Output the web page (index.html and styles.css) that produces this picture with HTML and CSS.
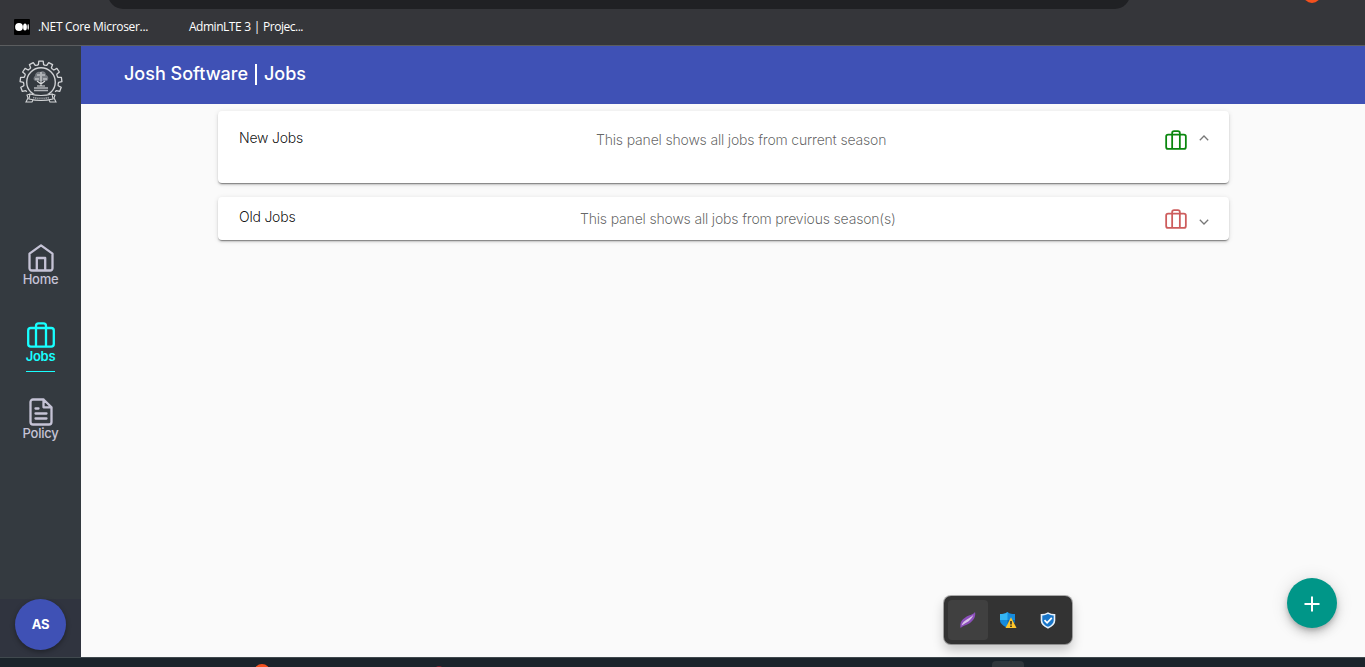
FILE: index.html
```html
<!DOCTYPE html>
<html lang="en">
<head>
<meta charset="utf-8">
<title>Josh Software | Jobs</title>
<link rel="stylesheet" href="styles.css">
</head>
<body>
<svg width="0" height="0" class="defs">
  <symbol id="case" viewBox="0 0 28 26"><g fill="none" stroke="currentColor" stroke-width="2.3" stroke-linejoin="round"><rect x="1.2" y="6" width="25.6" height="18.6" rx="2.6"/><path d="M9 24.6V4a2.6 2.6 0 0 1 2.6-2.6h4.8A2.6 2.6 0 0 1 19 4v20.6"/></g></symbol>
</svg>
<header class="bookmarks">
  <div class="omnibox"></div>
  <div class="ext-dot"></div>
  <div class="bookmark first"><svg class="medium" width="16" height="16" viewBox="0 0 16 16"><rect width="16" height="16" rx="1" fill="#000"/><circle cx="5" cy="8" r="3.9" fill="#fff"/><ellipse cx="11" cy="8" rx="1.9" ry="3.5" fill="#fff"/><ellipse cx="14.2" cy="8" rx=".8" ry="3" fill="#ddd"/></svg><span>.NET Core Microser...</span></div>
  <div class="bookmark second"><span>AdminLTE 3 | Projec...</span></div>
</header>
<div class="app">
  <aside class="sidebar">
    <svg class="logo" width="44" height="46" viewBox="-22 -22 44 46" fill="none">
      <defs><path id="tooth" d="M-4.1-16.7-2.6-17.4-2.2-20.8H2.2L2.6-17.4 4.1-16.7"/></defs>
      <g stroke="#d3d5d8" stroke-width="1.3" stroke-linejoin="round">
        <use href="#tooth"/>
        <use href="#tooth" transform="rotate(27.7)"/><use href="#tooth" transform="rotate(-27.7)"/>
        <use href="#tooth" transform="rotate(55.4)"/><use href="#tooth" transform="rotate(-55.4)"/>
        <use href="#tooth" transform="rotate(83.1)"/><use href="#tooth" transform="rotate(-83.1)"/>
        <use href="#tooth" transform="rotate(110.8)"/><use href="#tooth" transform="rotate(-110.8)"/>
      </g>
      <circle r="14.3" stroke="#cfd1d4" stroke-width="1.4"/>
      <path d="M-15 12H15V24H-15Z" fill="#343a40"/>
      <path d="M-5-1c-3 0-3-4-1-5 0-3 3-5 5-4 3-2 6 0 6 3 3 1 3 6 0 6Z" fill="#777c82"/>
      <path d="M-6-3h4M2-3h4M-4-7h3M1-7h3M0-10V4M-4-1l4 3 4-3M-4 4h8" stroke="#dcdee0" stroke-width="1.1"/>
      <path d="M-7 6H7M-7 8.5H7" stroke="#b3b6ba" stroke-width="1.5"/>
      <path d="M-11 12Q0 15 11 12L12 17Q0 20-12 17ZM-11 12l-3 1 1 3-2 4 6 0 1-2M11 12l3 1-1 3 2 4-6 0-1-2" stroke="#d3d5d7" stroke-width="1.1"/>
      <path d="M-8 15.5Q0 17.5 8 15.5" stroke="#969a9f" stroke-width="1.8" stroke-dasharray="1.4 .7"/>
    </svg>
    <nav class="nav">
      <a class="item home"><svg width="26" height="28" viewBox="0 0 26 28" fill="none" stroke="currentColor" stroke-width="2.3" stroke-linejoin="round"><path d="M1.5 9.6 13 1.4l11.5 8.2v14.6a2.3 2.3 0 0 1-2.3 2.3H3.8a2.3 2.3 0 0 1-2.3-2.3Z"/><path d="M8.8 26.5V14h8.4v12.5"/></svg><span>Home</span></a>
      <a class="item active"><svg width="28" height="26"><use href="#case"/></svg><span>Jobs</span></a>
      <a class="item policy"><svg width="24" height="28" viewBox="0 0 24 28" fill="none" stroke="currentColor" stroke-width="2.3" stroke-linejoin="round" stroke-linecap="round"><path d="M14.5 1.5H4a2.5 2.5 0 0 0-2.5 2.5v20A2.5 2.5 0 0 0 4 26.5h16a2.5 2.5 0 0 0 2.5-2.5V9.3ZM14.5 1.5v7.8h8M6.5 10.5h3M6.5 15.5h11M6.5 20.5h11"/></svg><span>Policy</span></a>
    </nav>
    <div class="account"><div class="avatar">AS</div></div>
  </aside>
  <main class="main">
    <h1 class="title">Josh Software <span class="bar"></span> Jobs</h1>
    <section class="panels">
      <div class="panel open">
        <span class="name">New Jobs</span><span class="desc">This panel shows all jobs from current season</span>
        <svg class="case green" width="22" height="20"><use href="#case"/></svg>
        <svg class="chev" width="10" height="6" viewBox="0 0 10 6"><path d="M.8 5.2 5 1l4.2 4.2"/></svg>
      </div>
      <div class="panel closed">
        <span class="name">Old Jobs</span><span class="desc">This panel shows all jobs from previous season(s)</span>
        <svg class="case red" width="22" height="20"><use href="#case"/></svg>
        <svg class="chev" width="10" height="6" viewBox="0 0 10 6"><path d="M.8.8 5 5 9.2.8"/></svg>
      </div>
    </section>
  </main>
</div>
<footer class="taskbar"><i class="dot"></i><i class="red-dot"></i><i class="tray-button"></i></footer>
<div class="tray">
  <div class="cell selected"><svg width="18" height="18" viewBox="0 0 18 18"><path d="M1.5 17C1 12 2 9 7 6c3-2 7-2 9-5 1 4-1 8-5 11-3 2-6 2-9.5 5Z" fill="#8c4fbb"/><path d="M2.5 14.5c2-6 9-7 12-11-2 6-7 8-12 11Z" fill="#d9c5e8"/></svg></div>
  <div class="cell"><svg width="18" height="18" viewBox="0 0 18 18"><path d="M8.5 1C11 3 13 3 16 3v6c0 4-4 6-7.5 8C5 15 1 13 1 9V3c3 0 5 0 7.5-2Z" fill="#168bdc"/><path d="M8.5 1v8H1V3c3 0 5 0 7.5-2Z" fill="#35b6f4"/><path d="M8.5 9H16c0 4-4 6-7.5 8Z" fill="#0868b4"/><path d="M12 6.2 17.5 17h-11Z" fill="#fdc52c"/><path d="M12 10v3.5M12 14.6V16" stroke="#222" stroke-width="1.5"/></svg></div>
  <div class="cell"><svg width="16" height="17" viewBox="0 0 16 17"><path d="M8 1.2c2 1.3 4 1.7 6.5 1.7v5.6c0 3.7-3 5.7-6.5 7.3-3.5-1.6-6.5-3.6-6.5-7.3V2.9C4 2.9 6 2.5 8 1.2Z" fill="#1976c9" stroke="#e7f1fa" stroke-width="1.6"/><path d="m4.5 8.2 2.6 2.6 4.7-5" fill="none" stroke="#fff" stroke-width="1.7"/></svg></div>
</div>
<button class="fab" aria-label="Add"><svg width="16" height="16" viewBox="0 0 16 16"><path d="M8 .5v15M.5 8h15" stroke="#fff" stroke-width="2"/></svg></button>
</body>
</html>
```
FILE: styles.css
```css
* { box-sizing: border-box; }
body { margin: 0; height: 667px; overflow: hidden; display: flex; flex-direction: column; position: relative; background: #fafafa; font-family: Inter, "Liberation Sans", sans-serif; }
.defs { position: absolute; }
.bookmarks { position: relative; flex: 0 0 46px; display: flex; background: #35363a; border-bottom: 1px solid #5b5d5f; padding: 9px 0 0 14px; overflow: hidden; }
.omnibox { position: absolute; left: 108px; top: -21px; width: 1022px; height: 30px; border-radius: 15px; background: #202124; }
.ext-dot { position: absolute; left: 1303px; top: -15px; width: 18px; height: 18px; border-radius: 50%; background: #f4511e; }
.bookmark { display: flex; align-items: center; height: 36px; color: #fff; font: 12px "Open Sans", "Noto Sans", sans-serif; white-space: nowrap; }
.bookmark span { padding-bottom: 1px; }
.first { width: 175px; gap: 8px; }
.first span { letter-spacing: -.31px; }
.second span { letter-spacing: -.48px; word-spacing: .5px; }
.app { flex: 0 0 611px; display: flex; }
.sidebar { flex: 0 0 81px; display: flex; flex-direction: column; align-items: center; background: #343a40; }
.logo { margin-top: 14px; }
.nav { width: 81px; margin: 138px 0 0; display: flex; flex-direction: column; align-items: center; }
.item { height: 77px; display: flex; flex-direction: column; align-items: center; color: #c5c3d6; font-size: 13px; font-weight: 500; line-height: 16px; letter-spacing: -.25px; }
.item svg { display: block; flex: none; }
.home svg, .policy svg { margin-bottom: -1px; }
.active { color: #18ffff; font-weight: 600; }
.active svg { margin-top: 1px; }
.active span { padding: 0 0 7px; border-bottom: 1px solid; }
.account { margin-top: auto; width: 81px; height: 58px; background: #30343f; display: flex; justify-content: center; }
.avatar { width: 51px; height: 51px; padding-bottom: 1px; border-radius: 50%; background: #3f51b5; color: #fff; display: flex; align-items: center; justify-content: center; font-size: 13px; font-weight: 700; letter-spacing: -.3px; box-shadow: 0 2px 5px rgba(0,0,0,.35); }
.main { flex: 1; }
.title { height: 58px; margin: 0; padding: 0 0 2px 43px; display: flex; align-items: center; background: #3f51b5; color: #fff; font-size: 18px; line-height: 22px; font-weight: 500; }
.bar { width: 2px; height: 21px; background: #fff; margin: 0 7px; }
.panels { width: 1011px; margin: 7px 0 0 137px; }
.panel { display: grid; grid-template-columns: 200px 1fr 22px 22px; background: #fff; border-radius: 4px; box-shadow: 0 3px 1px -2px rgba(0,0,0,.2), 0 2px 2px rgba(0,0,0,.14), 0 1px 5px rgba(0,0,0,.12), 0 1px 0 rgba(0,0,0,.15); font-size: 14px; font-weight: 300; line-height: 20px; letter-spacing: -.18px; padding: 10px 20px 0 21px; }
.open { height: 72px; padding-top: 17px; }
.closed { height: 43px; margin-top: 14px; }
.name { color: rgba(0,0,0,.92); letter-spacing: -.22px; }
.desc { color: rgba(0,0,0,.62); padding-top: 2px; }
.open .desc { padding-left: 157px; }
.closed .desc { padding-left: 141px; }
.case { margin-top: 2px; }
.green { color: #0a870e; }
.red { color: #cd5c5c; }
.chev { margin: 7px 0 0; fill: none; stroke: #777; stroke-width: 1.3; justify-self: end; }
.closed .chev { margin-top: 12px; }
.taskbar { position: relative; flex: 0 0 10px; overflow: hidden; background: #1b242b; border-top: 1px solid #40494e; }
.dot { position: absolute; left: 254px; top: 6px; width: 16px; height: 16px; border-radius: 50%; background: #f4511e; }
.red-dot { position: absolute; left: 435px; top: 8px; width: 8px; height: 8px; border-radius: 50%; background: #79202e; }
.tray-button { position: absolute; left: 992px; top: 3px; width: 32px; height: 20px; border-radius: 4px; background: #30373c; }
.tray { position: absolute; left: 944px; top: 596px; width: 128px; height: 48px; padding: 4px; display: flex; background: #333; border-radius: 7px; box-shadow: 0 0 0 1px rgba(0,0,0,.3), 0 6px 12px rgba(0,0,0,.22); }
.cell { width: 40px; height: 40px; display: flex; align-items: center; justify-content: center; border-radius: 4px; }
.selected { background: #404040; }
.fab { position: absolute; left: 1287px; top: 578px; width: 50px; height: 50px; padding: 2px 0 0; border: 0; border-radius: 50%; background: #009688; display: flex; align-items: center; justify-content: center; box-shadow: 0 3px 5px -1px rgba(0,0,0,.2), 0 6px 10px rgba(0,0,0,.14), 0 1px 18px rgba(0,0,0,.12); }
```
